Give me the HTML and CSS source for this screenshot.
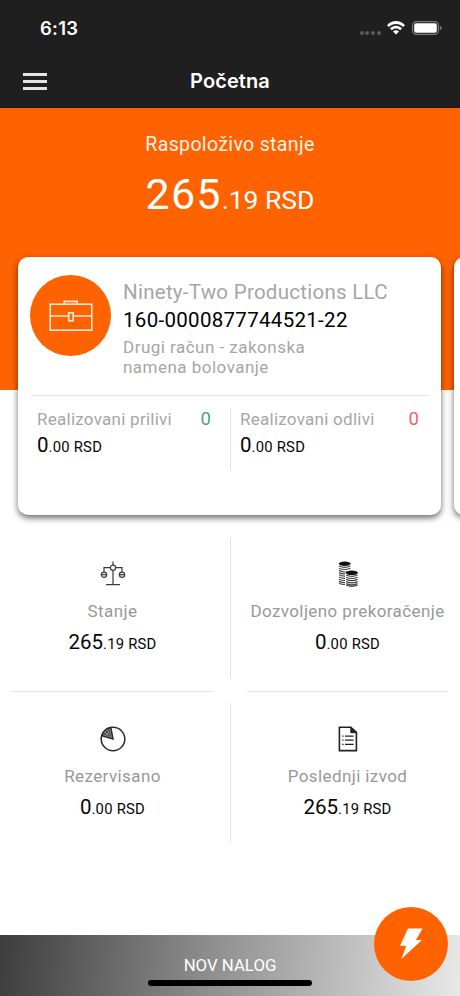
FILE: index.html
```html
<!DOCTYPE html>
<html lang="sr">
<head>
<meta charset="utf-8">
<title>Početna</title>
<link rel="stylesheet" href="styles.css">
</head>
<body>
<div class="app">
  <header class="top">
    <div class="status">
      <span class="time">6:13</span>
      <span class="signal"><i></i><i></i><i></i><i></i></span>
      <svg class="wifi" width="18" height="14" viewBox="0 0 18 14" fill="#fff">
        <path d="M0 4.3C5-1.3 13-1.3 18 4.3L16.2 6.1C12.2 1.9 5.8 1.9 1.8 6.1Z"/>
        <path d="M3 7.4C6.4 3.9 11.6 3.9 15 7.4L13.2 9.2C10.8 6.8 7.2 6.8 4.8 9.2Z"/>
        <path d="M6 10.4C7.7 8.9 10.3 8.9 12 10.4L9 13.6Z"/>
      </svg>
      <svg class="battery" width="30" height="14" viewBox="0 0 30 14">
        <rect x=".6" y=".6" width="25.8" height="12.8" rx="3.8" fill="none" stroke="#7b7b7b" stroke-width="1.2"/>
        <rect x="2.2" y="2.2" width="22.6" height="9.6" rx="2" fill="#fff"/>
        <path d="M27.8 4.7q1.9.6 1.9 2.3t-1.9 2.3z" fill="#7b7b7b"/>
      </svg>
    </div>
    <div class="navbar">
      <div class="menu"><i></i><i></i><i></i></div>
      <h1>Početna</h1>
    </div>
  </header>

  <main>
    <section class="hero">
      <div class="hero-label">Raspoloživo stanje</div>
      <div class="hero-amount">265<small>.19 RSD</small></div>
    </section>

    <section class="cards">
      <article class="card">
        <div class="account">
          <div class="avatar">
            <svg width="44" height="32" viewBox="0 0 44 32" fill="none" stroke="#ffe9d6" stroke-width="1.6">
              <rect x="1.2" y="4.2" width="41.6" height="26"/>
              <path d="M15.2 4V1.4h13V4M1.2 16h18.2M24.4 16h18.4"/>
              <rect x="19.7" y="12.8" width="4.4" height="8"/>
            </svg>
          </div>
          <div class="info">
            <div class="name">Ninety-Two Productions LLC</div>
            <div class="number">160-0000877744521-22</div>
            <div class="desc">Drugi račun - zakonska<br>namena bolovanje</div>
          </div>
        </div>
        <div class="flows">
          <div class="flow">
            <div class="flow-head"><span>Realizovani prilivi</span><b class="in">0</b></div>
            <div class="amount">0<small>.00 RSD</small></div>
          </div>
          <div class="flow">
            <div class="flow-head"><span>Realizovani odlivi</span><b class="out">0</b></div>
            <div class="amount">0<small>.00 RSD</small></div>
          </div>
        </div>
      </article>
      <article class="card"></article>
    </section>

    <section class="grid">
      <div class="cell">
        <svg width="26" height="26" viewBox="0 0 26 26" fill="none" stroke="#3a3a3a" stroke-width="1.2">
          <path d="M13 .5v3.500M13 9.500V23.400M6 23.600h14M10.400 6.600H4v4.400M15.600 6.600H22v4.400"/>
          <circle cx="13" cy="6.800" r="2.600"/>
          <circle cx="4" cy="13.700" r="2.600"/><path d="M.8 13.700h6.400"/>
          <circle cx="22" cy="13.700" r="2.600"/><path d="M18.800 13.700h6.400"/>
        </svg>
        <div class="label">Stanje</div>
        <div class="amount">265<small>.19 RSD</small></div>
      </div>
      <div class="cell">
        <svg width="26" height="26" viewBox="0 0 26 26">
          <g fill="none" stroke="#444" stroke-width="1.200">
            <path d="M4 5q5.700 2.600 11.400 0M4 7.200q5.700 2.600 11.400 0M4 9.400q5.700 2.600 8 1M4 11.600q3 1.500 6 1.300M4 13.800q3 1.500 6 1.300M4 16q3 1.500 6 1.300M4 18.200q3 1.500 6 1.300M4 20.400q3 1.500 6 1.300M4 22.200q3 1.500 6 1.300"/>
            <path d="M11.200 14q5.700 2.600 11.400 0M11.200 16.200q5.700 2.600 11.400 0M11.200 18.400q5.700 2.600 11.400 0M11.200 20.600q5.700 2.600 11.400 0M11.200 22.600q5.700 2.600 11.400 0M11.200 24.200q5.700 2.200 11.400 0"/>
          </g>
          <ellipse cx="9.700" cy="2.800" rx="6" ry="2.200" fill="#111"/>
          <ellipse cx="16.900" cy="11.800" rx="6" ry="2.300" fill="#111"/>
        </svg>
        <div class="label">Dozvoljeno prekoračenje</div>
        <div class="amount">0<small>.00 RSD</small></div>
      </div>
      <div class="cell">
        <svg width="26" height="26" viewBox="0 0 26 26" fill="none" stroke="#2b2b2b" stroke-width="1.500">
          <circle cx="13" cy="13" r="11.800"/>
          <path d="M13 13L10.800 1.600A11.800 11.800 0 0 0 1.900 9.800Z" fill="#999"/>
          <path d="M4 8l6 2.400M6 5l5 5.500M8.500 3l2 6M3 9.500L9.500 4" stroke-width=".8"/>
        </svg>
        <div class="label">Rezervisano</div>
        <div class="amount">0<small>.00 RSD</small></div>
      </div>
      <div class="cell">
        <svg width="26" height="26" viewBox="0 0 26 26" fill="none" stroke="#222" stroke-width="1.600">
          <path d="M4.400 1.200h11.400l5.600 5.200v18.200H4.400z"/>
          <path d="M15.800 1.200v5.500h5.600z" fill="#222" stroke-width="1"/>
          <path d="M10 10.200h8.600M10 14.200h8.600M10 18.400h8.600M7.300 10.200h1.300M7.300 14.200h1.300M7.300 18.400h1.300" stroke-width="1.300"/>
        </svg>
        <div class="label">Poslednji izvod</div>
        <div class="amount">265<small>.19 RSD</small></div>
      </div>
    </section>
  </main>

  <footer class="bottom">
    <div class="new-order">NOV NALOG</div>
    <div class="home-bar"></div>
    <div class="fab">
      <svg width="24" height="32" viewBox="0 0 24 32" fill="#fff"><path d="M9 .5h14.500l-6.600 11.400h6L2.400 31l4.800-13.200H1z"/></svg>
    </div>
  </footer>
</div>
</body>
</html>
```
FILE: styles.css
```css
* { box-sizing: border-box; }
body { margin: 0; background: #fff; font-family: Roboto, "Liberation Sans", sans-serif; color: #050505; }
.app { width: 460px; height: 996px; overflow: hidden; display: flex; flex-direction: column; }
small { font-size: 14.8px; letter-spacing: .25px; }
i { display: block; }

.top { height: 108px; background: #1f1f1f; border-bottom: 1px solid #1c1512; color: #fff; font-family: Inter, sans-serif; flex: none; }
.status { height: 56px; display: flex; align-items: center; padding: 0 18px 0 40px; }
.time { font-size: 18.5px; font-weight: 600; flex: 1; letter-spacing: .2px; }
.signal { display: flex; gap: 1.8px; margin: 10px 6px 0 0; }
.signal i { width: 4px; height: 4px; border-radius: 50%; background: #5b5b5b; }
.wifi { margin-right: 7px; }
.navbar { height: 50px; display: grid; grid-template-columns: 60px 1fr 60px; align-items: center; }
.menu { margin-left: 23px; width: 24px; display: grid; gap: 4px; }
.menu i { height: 3px; background: #e4e4e4; }
h1 { margin: 0; font-size: 20px; font-weight: 600; text-align: center; line-height: 24px; letter-spacing: .1px; }

main { flex: 1; background: linear-gradient(#ff6200 282px, #fff 282px); }
.hero { height: 149px; padding-top: 25px; text-align: center; color: #fff3e6; }
.hero-label { font-size: 19.5px; line-height: 24px; letter-spacing: .35px; }
.hero-amount { margin-top: 12px; font-size: 43px; line-height: 50px; letter-spacing: 1.2px; color: #fff; }
.hero-amount small { font-size: 26.5px; letter-spacing: 0; }

.cards { display: flex; gap: 13px; padding-left: 18px; height: 258px; }
.card { flex: 0 0 423px; background: #fff; border-radius: 10px; box-shadow: 0 3px 6px rgba(0,0,0,.58); }
.account { display: flex; gap: 12px; height: 138px; margin: 0 13px 0 12px; padding-top: 18px; }
.avatar { width: 81px; height: 81px; border-radius: 50%; background: #ff6200; display: grid; place-items: center; flex: none; }
.info { padding-top: 3px; color: #a6a6a6; white-space: nowrap; }
.name { font-size: 20.5px; line-height: 28px; letter-spacing: .27px; }
.number { font-size: 20.5px; line-height: 28px; letter-spacing: .3px; color: #000; }
.desc { margin-top: 3px; font-size: 17px; line-height: 20px; letter-spacing: .48px; }
.flows { border-top: 1px solid #e2e2e2; margin: 0 13px; padding-top: 12px; display: grid; grid-template-columns: 200px 197px; }
.flow { height: 62px; padding: 1px 9px 0 9px; }
.flow:first-child { border-right: 1px solid #e4e4e4; padding: 1px 19px 0 6px; }
.flow-head { display: flex; justify-content: space-between; font-size: 17px; line-height: 20px; color: #a6a6a6; letter-spacing: .26px; white-space: nowrap; }
.flow-head b { font-weight: 400; font-size: 18.5px; letter-spacing: 0; }
.in { color: #4ba283; }
.out { color: #f0616b; }
.amount { font-size: 20.5px; line-height: 24px; white-space: nowrap; }
.flow .amount { margin-top: 4px; }

.grid { padding: 23px 12px 0; display: grid; grid-template-columns: 1fr 1fr; grid-template-rows: 154px 152px; row-gap: 11px; }
.cell { position: relative; display: flex; flex-direction: column; align-items: center; padding-top: 23px; white-space: nowrap; }
.cell:nth-child(odd) { margin-right: 17px; }
.cell:nth-child(even) { margin-left: 17px; }
.cell:nth-child(-n+2) { border-bottom: 1px solid #e2e2e2; }
.cell:nth-child(odd)::after { content: ""; position: absolute; right: -18px; top: 0; width: 1px; height: 140px; background: #e4e4e4; }
.label { margin-top: 14px; font-size: 17px; line-height: 21px; color: #989898; letter-spacing: .4px; }
.cell .amount { margin-top: 8px; }

.bottom { position: relative; height: 61px; flex: none; background: linear-gradient(95deg, #3d3d3d, #8d8d8d 45%, #e8e8e8); text-align: center; }
.new-order { padding-top: 20px; font-size: 16.8px; line-height: 20px; color: #fff; }
.home-bar { width: 164px; height: 6px; margin: 5px auto 0; border-radius: 3px; background: #000; }
.fab { position: absolute; right: 12px; top: -28px; width: 74px; height: 74px; border-radius: 50%; background: #ff6200; display: grid; place-items: center; }
```
